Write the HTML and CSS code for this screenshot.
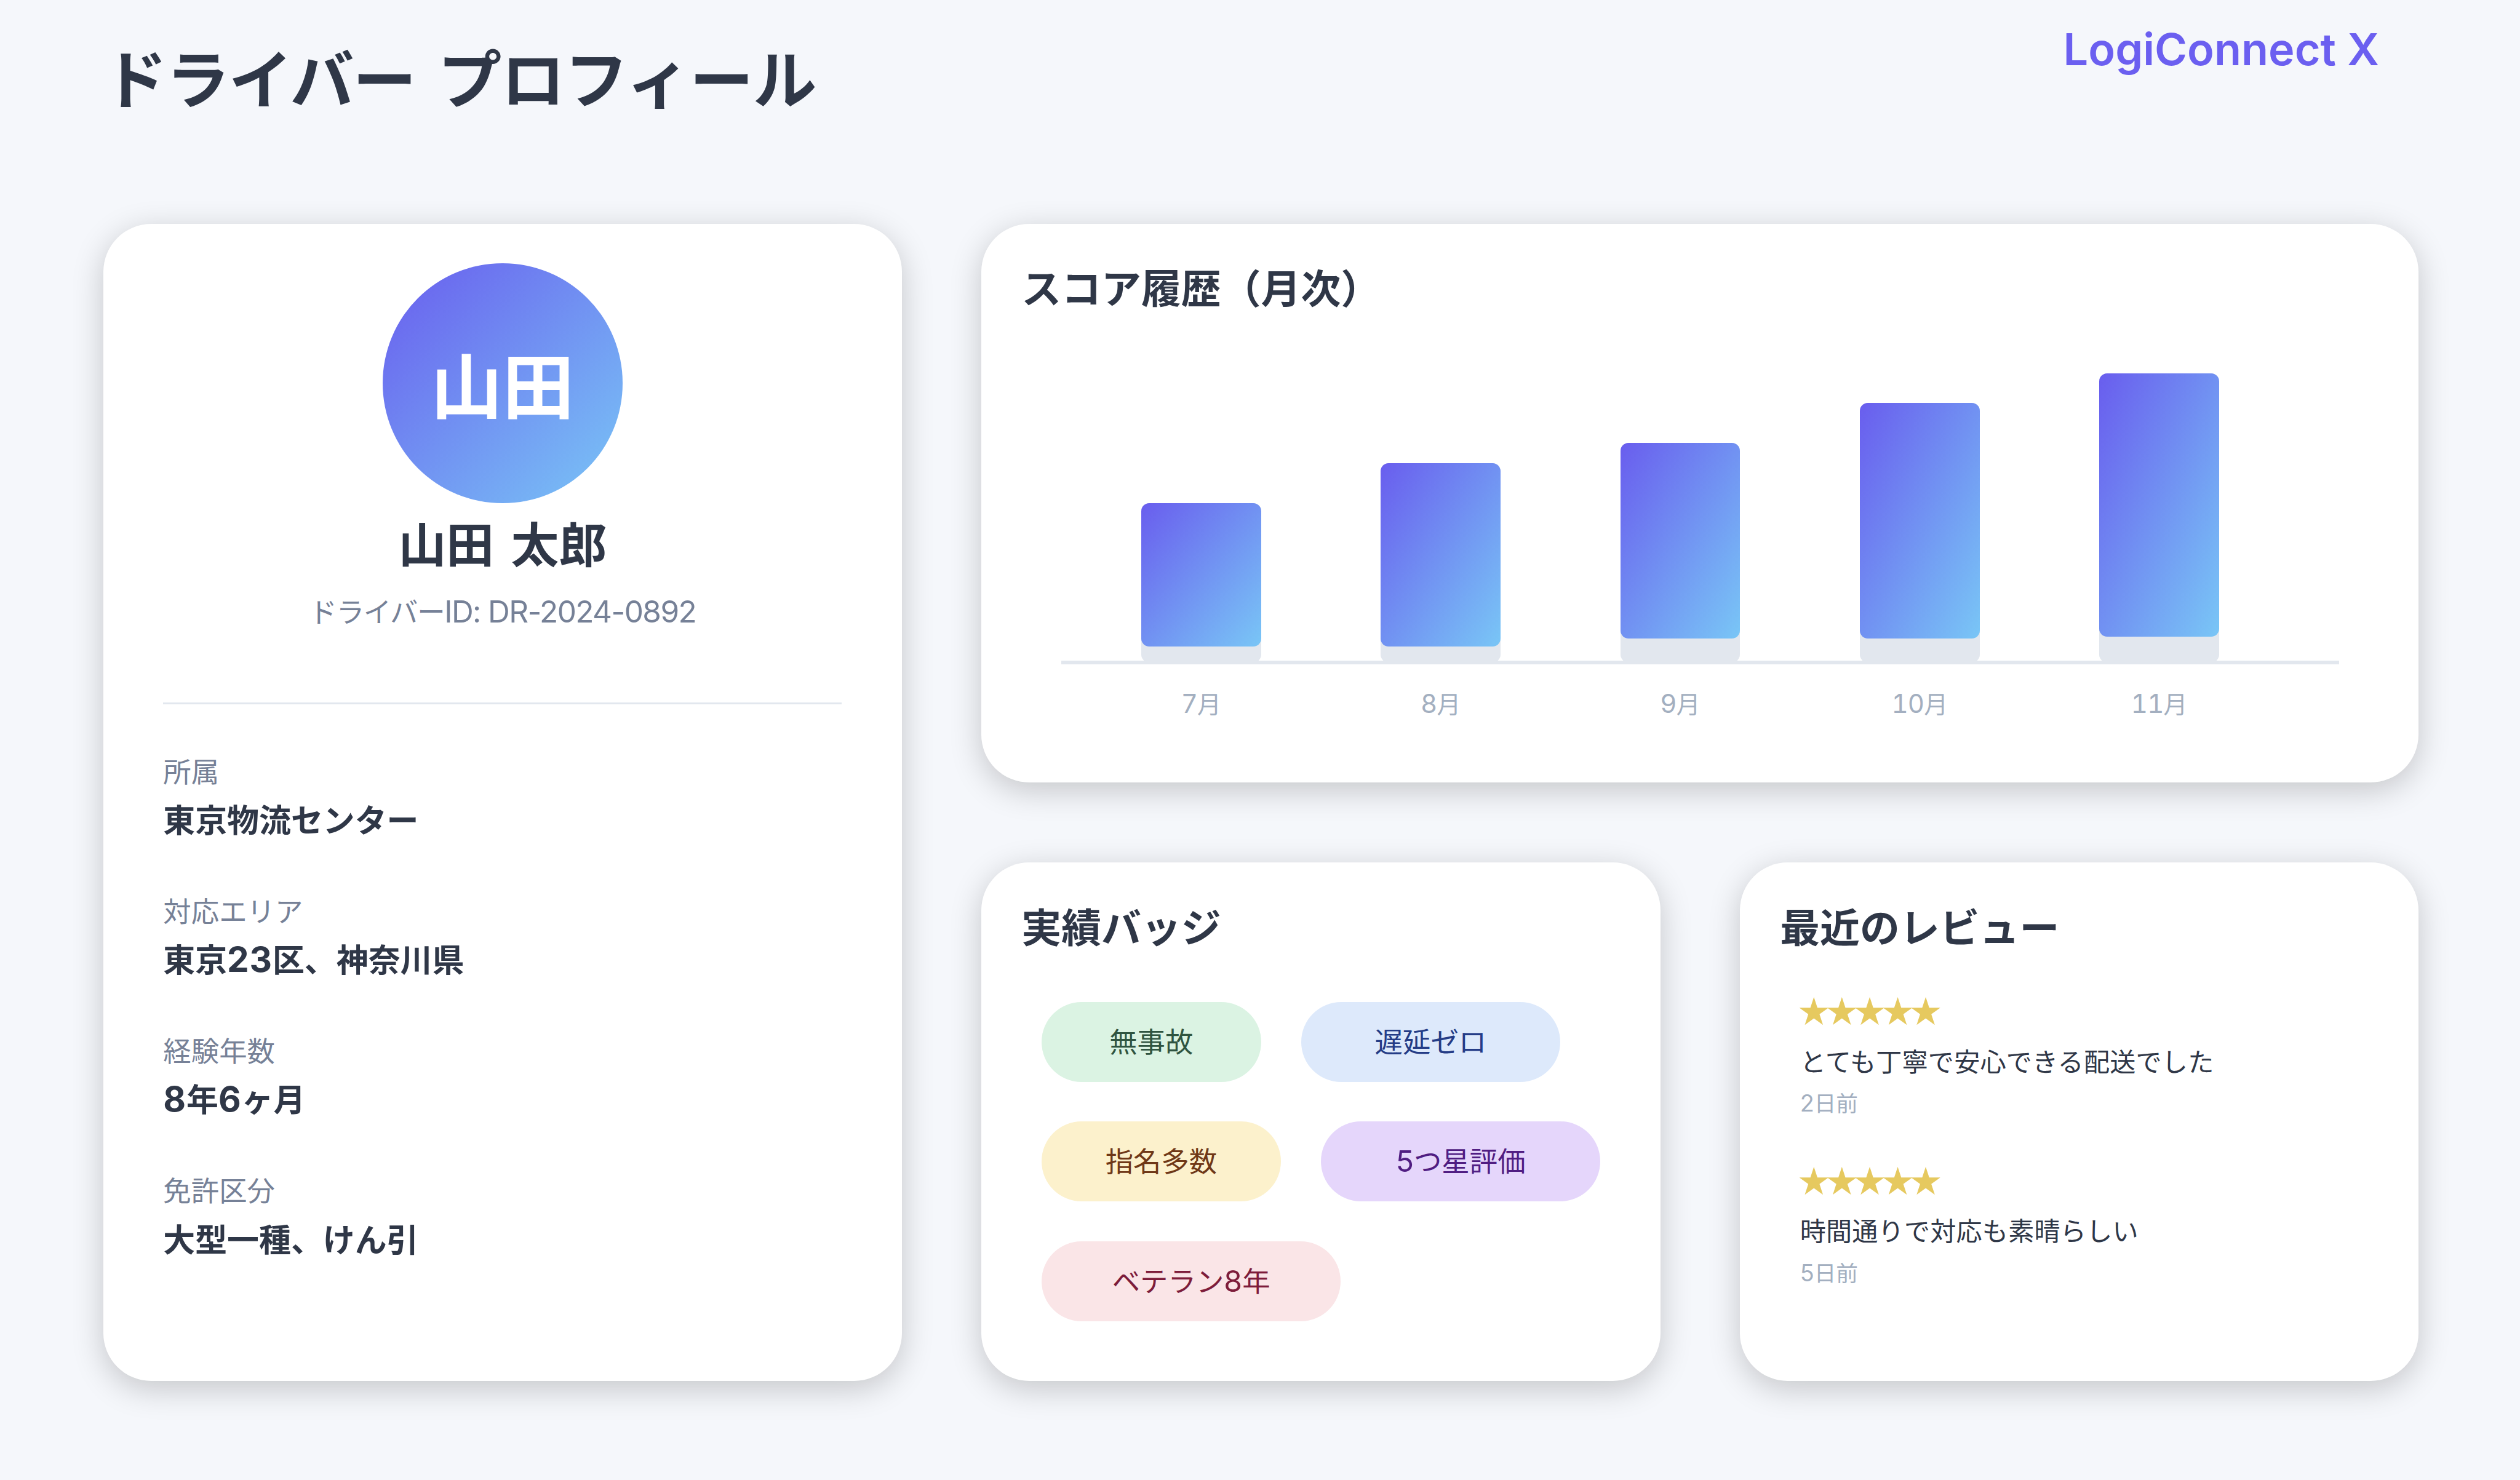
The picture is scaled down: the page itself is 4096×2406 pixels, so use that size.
FILE: index.html
```html
<!DOCTYPE html>
<html lang="ja">
<head>
<meta charset="utf-8">
<title>ドライバー プロフィール</title>
<link rel="stylesheet" href="styles.css">
</head>
<body>
<header class="header">
  <h1 class="title"><span class="title-lead">ドライバー </span>プロフィール</h1>
  <div class="brand">LogiConnect X</div>
</header>
<main class="grid">
  <section class="card profile">
    <div class="avatar">山田</div>
    <h2 class="name">山田 太郎</h2>
    <p class="driver-id">ドライバー<span class="latin">ID: DR-2024-0892</span></p>
    <hr class="divider">
    <dl class="facts">
      <div><dt>所属</dt><dd>東京物流センター</dd></div>
      <div><dt>対応エリア</dt><dd>東京<span class="latin">23</span>区、神奈川県</dd></div>
      <div><dt>経験年数</dt><dd><span class="latin">8</span>年<span class="latin">6</span>ヶ月</dd></div>
      <div><dt>免許区分</dt><dd>大型一種、けん引</dd></div>
    </dl>
  </section>
  <section class="card score">
    <h3 class="card-title">スコア履歴（月次）</h3>
    <div class="chart">
      <div class="track" style="height:8rem"><div class="bar" style="height:7.2rem"></div></div>
      <div class="track" style="height:10rem"><div class="bar" style="height:9.2rem"></div></div>
      <div class="track" style="height:11rem"><div class="bar" style="height:9.8rem"></div></div>
      <div class="track" style="height:13rem"><div class="bar" style="height:11.8rem"></div></div>
      <div class="track" style="height:14.5rem"><div class="bar" style="height:13.2rem"></div></div>
    </div>
    <div class="axis"></div>
    <div class="months">
      <span><span class="latin">7</span>月</span>
      <span><span class="latin">8</span>月</span>
      <span><span class="latin">9</span>月</span>
      <span><span class="latin">10</span>月</span>
      <span><span class="latin">11</span>月</span>
    </div>
  </section>
  <section class="card badges">
    <h3 class="card-title">実績バッジ</h3>
    <div class="badge-row">
      <span class="badge green">無事故</span>
      <span class="badge blue">遅延ゼロ</span>
    </div>
    <div class="badge-row">
      <span class="badge yellow">指名多数</span>
      <span class="badge purple"><span class="latin">5</span>つ星評価</span>
    </div>
    <div class="badge-row">
      <span class="badge pink">ベテラン<span class="latin">8</span>年</span>
    </div>
  </section>
  <section class="card reviews">
    <h3 class="card-title">最近のレビュー</h3>
    <article class="review">
      <div class="stars">★★★★★</div>
      <p class="comment">とても丁寧で安心できる配送でした</p>
      <p class="date"><span class="latin">2</span>日前</p>
    </article>
    <article class="review">
      <div class="stars">★★★★★</div>
      <p class="comment">時間通りで対応も素晴らしい</p>
      <p class="date"><span class="latin">5</span>日前</p>
    </article>
  </section>
</main>
</body>
</html>
```
FILE: styles.css
```css
/* 1rem is ten design units */
html { font-size: 32.443px; }
* { box-sizing: border-box; margin: 0; padding: 0; }
body {
  width: 4096px;
  height: 2406px;
  overflow: hidden;
  background: #f5f7fb;
  color: #2f3747;
  font-family: "Noto Sans CJK JP", sans-serif;
}
.latin { font-family: Inter, sans-serif; font-size: 1.06em; line-height: 0; }
.header {
  display: flex;
  justify-content: space-between;
  align-items: flex-start;
  height: 363.5px;
  padding: 0 229px 0 168px;
}
.title {
  margin-top: 1.29rem;
  font-size: 3.2rem;
  line-height: 5rem;
  letter-spacing: -0.03rem;
  white-space: nowrap;
}
.title-lead { letter-spacing: -0.06rem; word-spacing: 0.46rem; }
.brand {
  margin-top: 0.95rem;
  color: #6b5ff0;
  font: 600 2.22rem/3rem Inter, sans-serif;
}
.grid {
  display: grid;
  grid-template-columns: 40rem 34rem 34rem;
  grid-template-rows: 28rem 26rem;
  gap: 4rem;
  margin-left: 168px;
}
.card {
  background: #fff;
  border-radius: 2.4rem;
  box-shadow: 0 0.4rem 1.6rem rgba(0, 0, 0, 0.2);
}
.card-title {
  padding-left: 2rem;
  font-size: 2rem;
  line-height: 2.8rem;
  white-space: nowrap;
}

.profile {
  grid-row: 1 / 3;
  display: flex;
  flex-direction: column;
  align-items: center;
  padding: 2rem 3rem;
}
.avatar {
  width: 12rem;
  height: 12rem;
  border-radius: 50%;
  background: linear-gradient(to bottom right, #695dee, #79c6f6);
  color: #fff;
  font-size: 3.6rem;
  font-weight: 700;
  line-height: 11.96rem;
  text-align: center;
}
.name {
  margin-top: 0.38rem;
  font-size: 2.4rem;
  line-height: 3.2rem;
  word-spacing: 0.3rem;
}
.driver-id {
  margin-top: 0.8rem;
  color: #768197;
  font-size: 1.4rem;
  line-height: 2rem;
  letter-spacing: -0.04rem;
}
.driver-id .latin { font-size: 1.09em; letter-spacing: -0.032em; }
.divider {
  align-self: stretch;
  height: 0.1rem;
  margin-top: 3.62rem;
  border: 0;
  background: #e2e7ee;
}
.facts {
  align-self: stretch;
  display: grid;
  grid-auto-rows: 7rem;
  margin-top: 2.3rem;
}
.facts dt { color: #768197; font-size: 1.4rem; line-height: 2rem; }
.facts dd { margin-top: 0.23rem; font-size: 1.6rem; font-weight: 700; line-height: 2.4rem; }
.facts .latin { font-size: 1.09em; letter-spacing: 0.015em; }

.score { grid-column: 2 / 4; padding-top: 1.73rem; }
.chart {
  display: flex;
  align-items: flex-end;
  gap: 6rem;
  height: 17.47rem;
  padding-left: 8rem;
}
.track { width: 6rem; border-radius: 0.4rem; background: #e2e7ee; }
.bar { border-radius: 0.4rem; background: linear-gradient(to bottom right, #695dee, #79c6f6); }
.axis { height: 0.2rem; margin: -0.1rem 4rem 0; background: #e2e7ee; }
.months {
  display: flex;
  gap: 6rem;
  margin-top: 0.9rem;
  padding-left: 8rem;
  color: #a3afc0;
  font-size: 1.2rem;
  line-height: 2rem;
  text-align: center;
}
.months > span { width: 6rem; }
.months .latin { font-size: 1.08em; font-variant-numeric: tabular-nums; letter-spacing: -0.02em; }

.badges { padding-top: 1.76rem; }
.badge-row { display: flex; gap: 2rem; padding-left: 3rem; margin-top: 2rem; }
.card-title + .badge-row { margin-top: 2.44rem; }
.badge {
  height: 4rem;
  border-radius: 2rem;
  font-size: 1.4rem;
  line-height: 3.84rem;
  text-align: center;
}
.green { width: 11rem; background: #dbf3e3; color: #2f5440; }
.blue { width: 13rem; background: #dde9fb; color: #243c86; }
.yellow { width: 12rem; background: #fcf1cc; color: #6f3817; }
.purple { width: 14rem; background: #e5d6fb; color: #501d82; }
.pink { width: 15rem; background: #fae5e7; color: #7d1c3a; }

.reviews { padding-top: 1.76rem; }
.review { height: 8.5rem; padding: 1.84rem 0 0 3rem; }
.stars {
  margin-left: -0.08rem;
  color: #e6c95f;
  font-size: 1.56rem;
  line-height: 2rem;
  letter-spacing: -0.16rem;
}
.comment {
  margin-top: 0.54rem;
  font-size: 1.3rem;
  line-height: 2rem;
  letter-spacing: 0.005rem;
}
.date { margin-top: 0.12rem; color: #a3afc0; font-size: 1.1rem; line-height: 2rem; }
```
